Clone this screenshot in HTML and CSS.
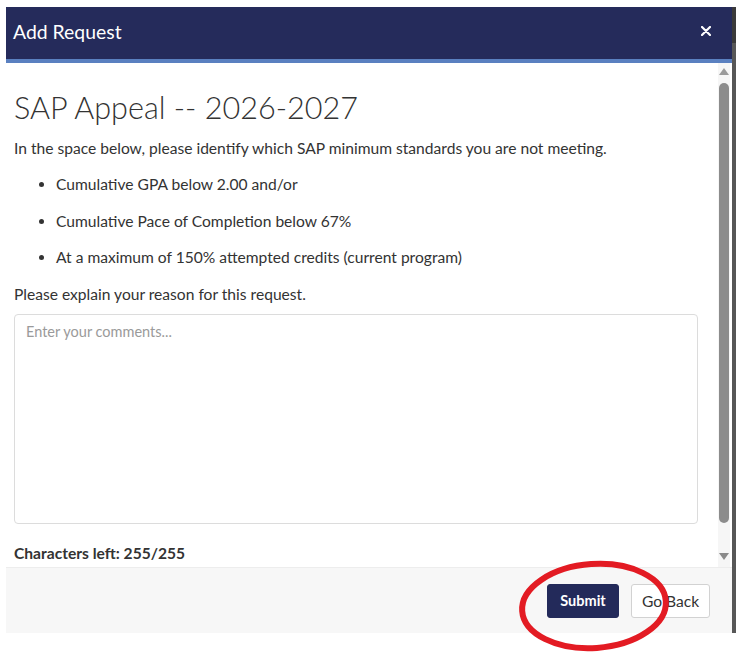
FILE: index.html
```html
<!DOCTYPE html>
<html lang="en">
<head>
  <meta charset="UTF-8" />
  <meta name="viewport" content="width=device-width, initial-scale=1.0" />
  <title>Add Request</title>
  <link rel="stylesheet" href="styles.css">
</head>
<body>
  <div class="page">
    <div class="modal">
      <header class="modal-head">
        <h1>Add Request</h1>
        <button type="button" class="close" aria-label="Close">
          <svg width="10" height="10" viewBox="0 0 10 10"><path d="M1 1 L9 9 M9 1 L1 9" stroke="#fff" stroke-width="2.2" stroke-linecap="round"/></svg>
        </button>
      </header>

      <div class="modal-body">
        <div class="modal-content">
          <h2>SAP Appeal -- 2026-2027</h2>
          <p class="intro">In the space below, please identify which SAP minimum standards you are not meeting.</p>
          <ul class="standards">
            <li>Cumulative GPA below 2.00 and/or</li>
            <li>Cumulative Pace of Completion below 67%</li>
            <li>At a maximum of 150% attempted credits (current program)</li>
          </ul>
          <label for="reason">Please explain your reason for this request.</label>
          <textarea id="reason" placeholder="Enter your comments..." maxlength="255"></textarea>
          <p class="counter">Characters left: 255/255</p>
        </div>
        <div class="scrollbar">
          <span class="arrow up"></span>
          <span class="thumb"></span>
          <span class="arrow down"></span>
        </div>
      </div>

      <footer class="modal-foot">
        <button type="button" class="btn btn-primary">Submit</button>
        <button type="button" class="btn btn-default">Go Back</button>
      </footer>
    </div>
    <div class="backdrop-edge"></div>

    <!-- markering rond de knop -->
    <svg class="highlight" width="170" height="110" viewBox="0 0 170 110">
      <ellipse cx="85" cy="55" rx="72" ry="42" fill="none" stroke="#e31b23" stroke-width="6" transform="rotate(-4 85 55)"/>
    </svg>
  </div>
</body>
</html>
```

FILE: styles.css
```css
* { box-sizing: border-box; }
body, html {
  margin: 0; padding: 0; background: #fff;
  font-family: 'Lato', 'Open Sans', sans-serif; color: #333;
}
.page {
  position: relative; display: flex; align-items: flex-start;
  min-height: 100vh; padding: 7px 0 0 6px;
}
.modal {
  width: 726px; height: 626px; display: flex; flex-direction: column;
  background: #fff;
}
.backdrop-edge {
  width: 4px; height: 626px;
  background: linear-gradient(#3a3a3a 0, #3a3a3a 36px, #575757 36px);
}
.modal-head {
  height: 56px; display: flex; align-items: center; justify-content: space-between;
  padding: 0 21px 4px 7px; background: #252b5b;
  border-bottom: 4px solid #5a80c0;
}
.modal-head h1 {
  margin: 0; font-size: 19.4px; font-weight: 400; color: #fff;
}
.close {
  background: none; border: none; padding: 0; width: 10px; height: 10px;
  display: flex; cursor: pointer;
}
.modal-body {
  height: 504px; display: flex; padding-right: 2px;
}
.modal-content {
  flex: 1; padding: 27px 20px 0 8px;
}
h2 {
  margin: 0; font-family: 'Lato Light', 'Lato', sans-serif;
  font-size: 30.6px; line-height: 36px; font-weight: 300; color: #333;
}
.intro {
  margin: 11px 0 0; font-size: 15.6px; line-height: 22px;
}
.standards {
  margin: 14px 0 0; padding-left: 42px; font-size: 15.6px; line-height: 22px;
}
.standards li { margin-bottom: 14.5px; }
label {
  display: block; margin-top: 15px; font-size: 15.6px; line-height: 22px;
}
textarea {
  display: block; width: 684px; height: 210px; margin-top: 9px; padding: 8px 11px;
  border: 1px solid #dcdcdc; border-radius: 4px; resize: none;
  font-family: inherit; font-size: 14.5px; color: #333;
}
textarea::placeholder { color: #9a9a9a; }
.counter {
  margin: 18px 0 0; font-size: 15.6px; line-height: 22px; font-weight: 700; color: #333;
}
.scrollbar {
  width: 12px; display: flex; flex-direction: column; align-items: center;
  background: #f6f6f6;
}
.arrow {
  width: 0; height: 0; border-left: 5px solid transparent; border-right: 5px solid transparent;
}
.arrow.up { margin-top: 5px; border-bottom: 7px solid #9a9a9a; }
.arrow.down { margin-top: 30px; border-top: 7px solid #8a8a8a; }
.thumb {
  width: 10px; height: 440px; margin-top: 8px; border-radius: 5px; background: #8c8c8c;
}
.modal-foot {
  flex: 1; display: flex; align-items: center; justify-content: flex-end; gap: 12px;
  padding: 0 22px 0 0; background: #f7f7f7; border-top: 1px solid #ededed;
}
.btn {
  height: 34px; padding: 0; border-radius: 3px; font-family: inherit;
  font-size: 15.6px; white-space: nowrap; cursor: pointer;
}
.btn-primary {
  width: 72px; background: #232a5a; color: #fff; font-weight: 700; border: 1px solid #232a5a;
  font-size: 14.5px;
}
.btn-default {
  width: 79px; background: #fff; color: #333; border: 1px solid #d2d2d2;
}
.highlight {
  position: absolute; left: 509px; top: 551px; pointer-events: none;
}
```
